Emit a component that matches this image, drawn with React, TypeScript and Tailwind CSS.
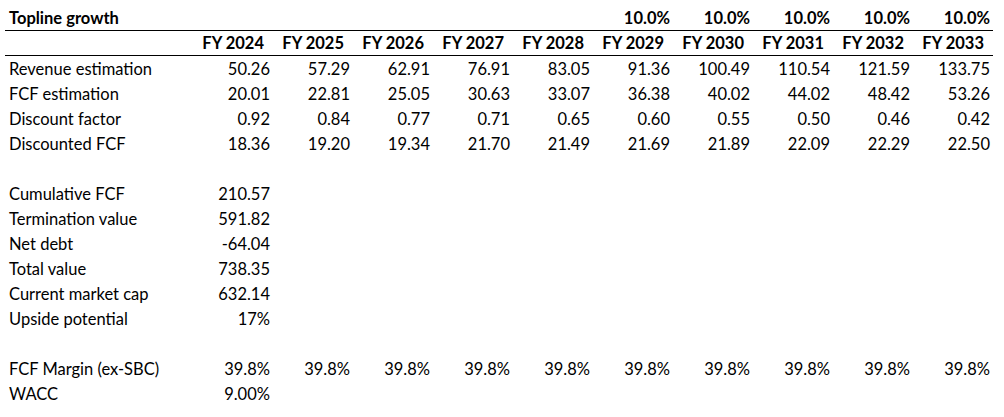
const years = ['FY 2024', 'FY 2025', 'FY 2026', 'FY 2027', 'FY 2028', 'FY 2029', 'FY 2030', 'FY 2031', 'FY 2032', 'FY 2033'];

const projections: [string, string[]][] = [
  ['Revenue estimation', ['50.26', '57.29', '62.91', '76.91', '83.05', '91.36', '100.49', '110.54', '121.59', '133.75']],
  ['FCF estimation', ['20.01', '22.81', '25.05', '30.63', '33.07', '36.38', '40.02', '44.02', '48.42', '53.26']],
  ['Discount factor', ['0.92', '0.84', '0.77', '0.71', '0.65', '0.60', '0.55', '0.50', '0.46', '0.42']],
  ['Discounted FCF', ['18.36', '19.20', '19.34', '21.70', '21.49', '21.69', '21.89', '22.09', '22.29', '22.50']],
];

const summary: [string, string][] = [
  ['Cumulative FCF', '210.57'],
  ['Termination value', '591.82'],
  ['Net debt', '-64.04'],
  ['Total value', '738.35'],
  ['Current market cap', '632.14'],
  ['Upside potential', '17%'],
];

function Row({ label, values, bold, border, header }: { label?: string; values: string[]; bold?: boolean; border?: boolean; header?: boolean }) {
  return (
    <div className={`grid grid-cols-[188px_repeat(10,80px)] h-[25px] items-end pb-[2px] ${border ? 'border-b border-black' : ''} ${bold ? 'font-bold' : ''}`}>
      <div className="pl-1 whitespace-nowrap">{label}</div>
      {Array.from({ length: 10 }).map((_, i) => (
        <div key={i} className={`text-right whitespace-nowrap ${header ? 'pr-[9px]' : 'pr-[3px]'}`}>{values[i] ?? ''}</div>
      ))}
    </div>
  );
}

export default function App() {
  return (
    <div className="w-[1004px] h-[417px] bg-white text-black font-['Lato',sans-serif] text-[16.5px] leading-[20px]">
      <div className="pl-[5px] pt-[6px] w-[993px]">
        <Row label="Topline growth" values={['', '', '', '', '', '10.0%', '10.0%', '10.0%', '10.0%', '10.0%']} bold border />
        <Row values={years} bold border header />
        {projections.map(([label, vals]) => (
          <Row key={label} label={label} values={vals} />
        ))}
        <Row values={[]} />
        {summary.map(([label, v]) => (
          <Row key={label} label={label} values={[v]} />
        ))}
        <Row values={[]} />
        <Row label="FCF Margin (ex-SBC)" values={Array(10).fill('39.8%')} />
        <Row label="WACC" values={['9.00%']} />
      </div>
    </div>
  );
}
